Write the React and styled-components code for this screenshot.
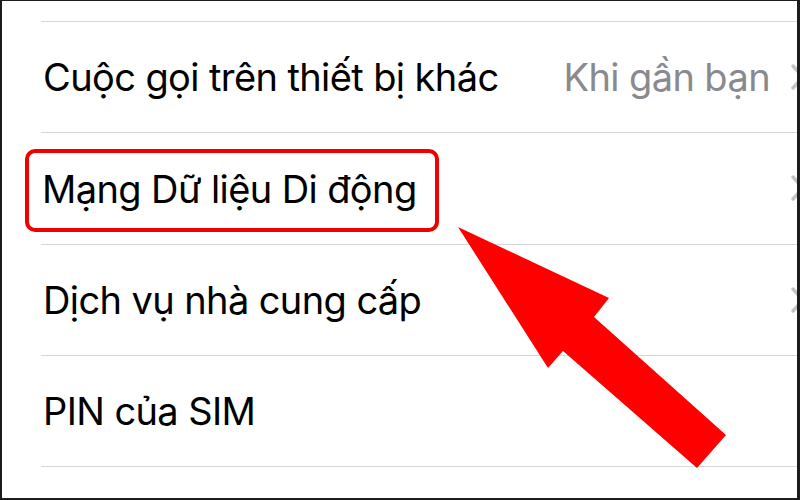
import React from 'react';
import styled, { createGlobalStyle } from 'styled-components';

const GlobalStyle = createGlobalStyle`
  html, body {
    margin: 0;
    padding: 0;
    background: #ffffff;
  }
  body {
    font-family: Inter, "Liberation Sans", "Noto Sans", sans-serif;
  }
`;

const rows = [
  { label: 'Cuộc gọi trên thiết bị khác', value: 'Khi gần bạn' },
  { label: 'Mạng Dữ liệu Di động', highlight: true },
  { label: 'Dịch vụ nhà cung cấp' },
  { label: 'PIN của SIM', noChevron: true },
];

const App = () => {
  return (
    <>
      <GlobalStyle />
      <Frame>
        <List>
          {rows.map((row) => (
            <Row key={row.label}>
              <Label $highlight={row.highlight}>{row.label}</Label>
              <Trailing>
                {row.value && <Value>{row.value}</Value>}
                {!row.noChevron && <Chevron />}
              </Trailing>
            </Row>
          ))}
          <Row $last />
        </List>
        <Arrow viewBox="0 0 800 500">
          <polygon points="458,227 609,298 594,317 726,435 697,468 563,351 548,368" fill="#ff0000" />
        </Arrow>
      </Frame>
    </>
  );
};

const Chevron = () => (
  <ChevronSvg viewBox="0 0 14 26">
    <path d="M2 2 L12 13 L2 24" fill="none" stroke="#c4c4c7" strokeWidth="3.4" strokeLinecap="round" strokeLinejoin="round" />
  </ChevronSvg>
);

const Frame = styled.div`
  position: relative;
  box-sizing: border-box;
  width: 800px;
  height: 500px;
  overflow: hidden;
  background: #ffffff;
  border-style: solid;
  border-color: #1c1c1c;
  border-width: 1px 3px 2px 2px;
`;

const List = styled.div`
  display: flex;
  flex-direction: column;
  padding-top: 20px;
`;

const Row = styled.div`
  box-sizing: border-box;
  display: flex;
  align-items: center;
  justify-content: space-between;
  flex-shrink: 0;
  height: ${({ $last }) => ($last ? '2px' : '111.3px')};
  margin-left: 39px;
  border-top: 1.5px solid #d6d6d8;
`;

const Label = styled.span`
  box-sizing: border-box;
  font-size: 38px;
  color: #000000;
  letter-spacing: -0.6px;
  white-space: nowrap;
  ${({ $highlight }) =>
    $highlight &&
    `
    margin-top: 5px;
    padding: 13px 18px 16px 13px;
    border: 4.5px solid #ee0000;
    border-radius: 10px;
  `}
  margin-left: ${({ $highlight }) => ($highlight ? '-16px' : '2px')};
`;

const Trailing = styled.div`
  display: flex;
  align-items: center;
  gap: 21px;
  margin-right: -8px;
`;

const Value = styled.span`
  font-size: 38px;
  color: #8a8a8e;
  letter-spacing: -0.6px;
`;

const ChevronSvg = styled.svg`
  width: 14px;
  height: 26px;
`;

const Arrow = styled.svg`
  position: absolute;
  left: -2px;
  top: -1px;
  width: 800px;
  height: 500px;
  pointer-events: none;
`;

export default App;
